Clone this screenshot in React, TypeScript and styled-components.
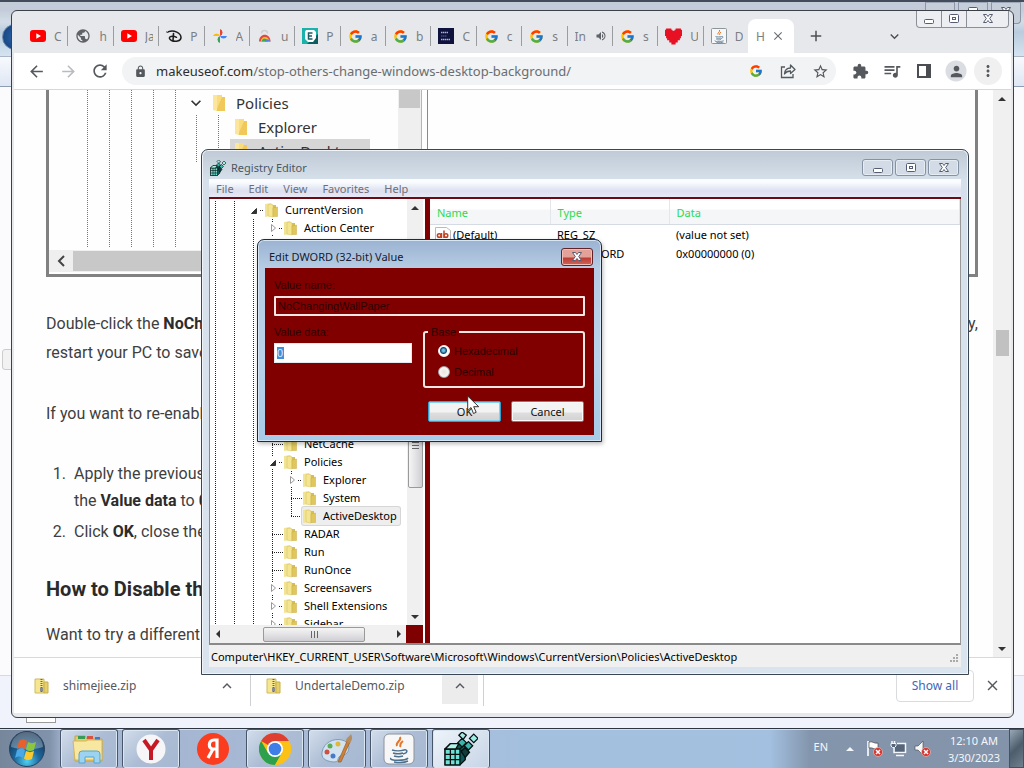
import React from "react";
import styled, { createGlobalStyle, css } from "styled-components";
import {
  MdArrowBack, MdArrowForward, MdRefresh, MdLock, MdStarBorder, MdExtension, MdQueueMusic,
  MdPerson, MdMoreVert, MdClose, MdAdd, MdKeyboardArrowDown, MdKeyboardArrowUp, MdPublic, MdVolumeUp,
} from "react-icons/md";
import { FcGoogle } from "react-icons/fc";

const Global = createGlobalStyle`
  * { box-sizing: border-box; }
  body { margin: 0; font-family: "Noto Sans", "Open Sans", sans-serif; font-size: 11px; color: #111; overflow: hidden; }
  button, input { font: inherit; color: inherit; margin: 0; padding: 0; }
  button { border: 0; background: none; display: flex; align-items: center; justify-content: center; }
  svg { display: block; flex: none; }
`;

const Screen = styled.div`
  display: flex; flex-direction: column; height: 100vh; overflow: hidden;
`;
const Desktop = styled.main`
  position: relative; flex: 1; min-height: 0; overflow: hidden; background: #f0f3fb;
`;

/* ---------- window at the back ---------- */
const BackWindow = styled.div`
  height: 100%; display: flex; flex-direction: column; border-top: 2px solid #434c5b;
`;
const BackTop = styled.div`
  height: 55px; display: flex; justify-content: space-between;
  background: linear-gradient(#c3ccd8 0 8px, #d3dde8 20px, #b9cbdd 30px, #d6e4f1);
  border-bottom: 1px solid #aab6c6;
`;
const BackOrb = styled.div`
  margin: 22px 0 0 2px; width: 26px; height: 26px; border-radius: 13px;
  background: radial-gradient(#2a63a8, #123d78); border: 1px solid #6b86a8;
`;
const BackControls = styled.div`
  display: flex; gap: 3px; padding-right: 3px;
`;
const BackControl = styled.div`
  width: 30px; height: 22px; border: 1px solid #8b96a6; border-top-color: #9da8b8; border-radius: 0 0 4px 4px;
  background: #c5ced9; display: flex; justify-content: center; padding-top: 3px;
`;
const BackBar = styled.div`
  height: 30px; background: linear-gradient(#f7f9fd, #dfe7f4); border-bottom: 1px solid #8f9db3;
`;
const BackPage = styled.div`
  flex: 1; background: #fbfbfd; display: flex; align-items: center; padding-left: 2px;
`;
const BackStub = styled.div`
  width: 20px; height: 21px; border: 1px solid #ccc; border-radius: 3px; background: #f2f2f2; margin-bottom: 43px;
`;
const BackFoot = styled.div`
  height: 53px; border-top: 1px solid #d5dae2; background: #f0f3fb; display: flex; align-items: flex-end; padding: 0 0 5px 26px;
`;
const BackTab = styled.div`
  width: 30px; height: 20px; border: 1px solid #9a9a9a; background: #fff;
`;

/* ---------- browser ---------- */
const Browser = styled.section`
  position: absolute; inset: 10px 10px 10px 11px; display: flex; flex-direction: column;
  border: 1px solid #3c4047; border-radius: 6px; background: #e7e8eb; padding: 0 2px 4px; overflow: hidden;
`;
const TabStrip = styled.nav`
  height: 42px; display: flex; align-items: flex-end; padding-left: 9px;
`;
const Tabs = styled.div`
  flex: 1; min-width: 0; height: 34px; display: flex; align-items: center;
`;
const Tab = styled.button`
  flex: 1; min-width: 0; height: 20px; justify-content: flex-start; gap: 8px; padding-left: 7px;
  border-right: 1px solid #9a9ca0; color: #5f6368; font-size: 12px; overflow: hidden;
  &:last-child { border-right: 0; }
`;
const TabLabel = styled.span<{ $lead?: boolean }>`
  width: ${(p) => (p.$lead ? 12 : 8)}px; overflow: hidden; white-space: nowrap; text-align: left;
  color: #7b7e83;
`;
const ActiveTab = styled.div`
  width: 46px; height: 34px; background: #fff; border-radius: 8px 8px 0 0; display: flex; align-items: center;
  gap: 3px; padding-left: 8px; color: #6b6e72; font-size: 12px;
`;
const StripEnd = styled.div`
  width: 217px; align-self: stretch; display: flex; align-items: flex-end; color: #4c4f54;
`;
const StripButton = styled.button<{ $after?: number }>`
  width: 28px; height: 34px; margin-left: ${(p) => p.$after || 0}px;
`;
const Controls = styled.div`
  align-self: flex-start; margin: 0 2px 0 auto; display: flex; height: 17px;
  border: 1px solid #8b8f98; border-top: 0; border-radius: 0 0 4px 4px; background: #eceef1;
`;
const Control = styled.button<{ $w: number }>`
  width: ${(p) => p.$w}px; & + & { border-left: 1px solid #8b8f98; }
`;
const Toolbar = styled.div`
  height: 37px; background: #fff; border-bottom: 1px solid #d6d7da; display: flex; align-items: center; gap: 4px;
  padding: 0 9px 0 8px; color: #55585d;
`;
const ToolButton = styled.button<{ $round?: string; $faint?: boolean }>`
  width: 28px; height: 28px; border-radius: 14px; background: ${(p) => p.$round || "none"};
  color: ${(p) => (p.$faint ? "#b9bbbe" : "inherit")};
`;
const Omnibox = styled.form`
  flex: 1; min-width: 0; height: 28px; margin: 0 6px 0 4px; border-radius: 14px; background: #f1f3f4; display: flex;
  align-items: center; gap: 9px; padding: 0 2px 0 12px;
`;
const Url = styled.a`
  flex: 1; min-width: 0; overflow: hidden; white-space: nowrap; font-size: 13px; line-height: 20px; color: #6a6d71;
  text-decoration: none; strong { font-weight: 400; color: #2b2d30; }
`;
const OmniActions = styled.div`
  display: flex; gap: 4px;
`;
const Viewport = styled.div`
  flex: 1; min-height: 0; display: flex; background: #fefefe;
`;
const Article = styled.article`
  flex: 1; min-width: 0; overflow: hidden; padding: 0 15px 0 32px; font-family: Roboto, sans-serif;
  font-size: 16px; line-height: 29px; color: #3f3f3f;
  b { color: #2c2c2c; font-weight: 700; }
`;
const PageScroll = styled.div`
  width: 18px; background: #f0f0f0; display: flex; flex-direction: column; align-items: center;
`;
const Arrow = styled.button<{ $end?: boolean }>`
  width: 15px; height: 17px; flex: none; color: #444; margin-top: ${(p) => (p.$end ? "auto" : 0)};
`;
const PageThumb = styled.div`
  width: 13px; height: 26px; margin-top: 223px; margin-bottom: auto; background: #c1c1c1;
`;
const Line = styled.p<{ $top?: number }>`
  margin: ${(p) => p.$top || 0}px 0 0; display: flex; justify-content: space-between; white-space: nowrap;
`;
const Steps = styled.ol`
  margin: 32px 0 0; padding-left: 24px; line-height: 27px; white-space: nowrap;
  li { padding-left: 4px; margin-bottom: 4px; }
`;
const Heading = styled.h2`
  margin: 29px 0 0; font-size: 20px; line-height: 30px; color: #2a2a2a; white-space: nowrap;
`;

/* ---------- figure in the article ---------- */
const Figure = styled.figure`
  margin: 0; height: 187px; border: solid #818181; border-width: 0 3px 3px; display: flex; overflow: hidden;
  font-family: "Noto Sans", "Open Sans", sans-serif; font-size: 15px; line-height: 24px; color: #333;
`;
const FigTree = styled.div`
  width: 379px; border-right: 1px solid #8a8a8a; padding-right: 6px; display: flex; flex-direction: column;
  background: linear-gradient(#b5b5b5, #b5b5b5) 372px 0 / 1px 100% no-repeat;
`;
const FigBody = styled.div`
  flex: 1; min-height: 0; display: flex;
`;
const FigRails = styled.div`
  display: flex; padding-left: 22px;
`;
const FigRail = styled.div`
  width: 22px; margin-bottom: 2px;
  background: repeating-linear-gradient(#777 0 1px, transparent 1px 2px) 16px 0 / 1px 100% no-repeat;
`;
const FigRows = styled.div`
  flex: 1; min-width: 0; padding: 1px 0 0 5px;
`;
const FigRow = styled.div<{ $picked?: boolean }>`
  height: 24px; display: flex; align-items: center; gap: 10px; width: fit-content; padding-right: 12px; white-space: nowrap;
  ${(p) => p.$picked && css`background: linear-gradient(#d6d6d6, #d6d6d6) 44px 0 / 100% 100% no-repeat;`}
`;
const FigLead = styled.span<{ $wide?: boolean }>`
  width: ${(p) => (p.$wide ? 38 : 16)}px; display: flex; height: 24px; align-items: center;
  background: ${(p) => (p.$wide
    ? "repeating-linear-gradient(#777 0 1px, transparent 1px 2px) 10px 0 / 1px 100% no-repeat, repeating-linear-gradient(#777 0 1px, transparent 1px 2px) 32px 0 / 1px 100% no-repeat"
    : "none")};
`;
const FigScroll = styled.div`
  width: 23px; background: #efefef; &::before { content: ""; display: block; margin-left: 1px; width: 21px; height: 18px; background: #c8c8c8; }
`;
const FigFoot = styled.div`
  height: 22px; margin-bottom: 2px; display: flex; align-items: center; background: #efefef; color: #444;
`;
const FigThumb = styled.div`
  flex: 1; height: 20px; background: #c8c8c8;
`;

/* ---------- download shelf ---------- */
const Shelf = styled.footer`
  height: 56px; background: #fff; border-top: 1px solid #d8d9db; display: flex; align-items: center; padding: 0 1px 0 5px;
`;
const Download = styled.div`
  width: 233px; height: 40px; border-right: 1px solid #cfd0d3; display: flex; align-items: center; gap: 13px;
  padding: 0 5px 0 15px; font-size: 12px; color: #55585d; &:first-child { width: 232px; }
  & > span { flex: 1; }
`;
const ShelfButton = styled.button<{ $hot?: boolean }>`
  width: 36px; height: 36px; background: ${(p) => (p.$hot ? "#ececec" : "none")}; color: #55585d;
`;
const ShowAll = styled.button`
  width: 78px; height: 32px; margin-left: auto; border: 1px solid #d9dbdf; border-radius: 4px; color: #4267b8; font-size: 12px;
`;

/* ---------- glass windows ---------- */
const Registry = styled.section`
  position: absolute; inset: 149px 55px 53px 201px; display: flex; flex-direction: column; padding: 0 7px 7px;
  border: 1px solid #3b4654; border-radius: 7px 7px 0 0;
  background: linear-gradient(#bfcad6, #d5e0ea 30px, #d9e4ee); box-shadow: inset 0 0 0 1px #eef4f9;
`;
const TitleBar = styled.header<{ $h: number; $pad?: number }>`
  height: ${(p) => p.$h}px; padding: ${(p) => p.$pad || 0}px 1px 0; display: flex; align-items: center; gap: 5px; color: #4e565f;
`;
const TitleText = styled.h1`
  flex: 1; margin: 0; font-size: 11px; font-weight: 400;
`;
const FrameButton = styled.button`
  width: 31px; height: 17px; border: 1px solid #8492a3; border-radius: 3px; background: #d3dce6; box-shadow: inset 0 0 0 1px #e5ecf3;
`;
const FrameButtons = styled.div`
  display: flex; gap: 2px; padding-right: 1px;
`;
const MenuBar = styled.nav`
  height: 20px; display: flex; align-items: center; gap: 15px; padding-left: 7px; color: #6c6e7b;
  background: linear-gradient(#fafcfe 0 3px, #eff3fa 6px, #dddff0 12px, #e8e8f5);
  border-bottom: 2px solid #6a0a14; flex: none;
  button { height: 17px; }
`;
const Panes = styled.div`
  flex: 1; min-height: 0; display: flex; background: #7f0000; border-bottom: 2px solid #8a8a8a; border-left: 1px solid #888; border-right: 1px solid #999;
`;
const TreePane = styled.div`
  width: 215px; display: flex; flex-direction: column; border-right: 2px solid #fff; background: #fff;
`;
const TreeBody = styled.div`
  flex: 1; min-height: 0; display: flex;
`;
const Rows = styled.div`
  flex: 1; min-width: 0; overflow: hidden; padding-top: 2px;
`;
const Row = styled.div<{ $h?: number }>`
  height: ${(p) => p.$h || 18}px; display: flex; white-space: nowrap; color: #000;
`;
const dots = "repeating-linear-gradient(#222 0 1px, transparent 1px 2px)";
const hdots = "repeating-linear-gradient(90deg, #222 0 1px, transparent 1px 2px)";
type Kind = "pipe" | "tee" | "elbow" | "exp" | "root" | "blank";
const Guide = styled.span<{ $kind: Kind }>`
  width: ${(p) => (p.$kind === "pipe" || p.$kind === "blank" ? 19 : 16)}px; flex: none; display: flex; align-items: center;
  ${(p) => p.$kind === "pipe" && css`background: ${dots} 5px 0 / 1px 100% no-repeat;`}
  ${(p) => p.$kind === "tee" && css`background: ${dots} 5px 0 / 1px 100% no-repeat, ${hdots} 5px 9px / 11px 1px no-repeat;`}
  ${(p) => p.$kind === "elbow" && css`background: ${dots} 5px 0 / 1px 10px no-repeat, ${hdots} 5px 9px / 11px 1px no-repeat;`}
  ${(p) => p.$kind === "exp" && css`background: ${dots} 5px 0 / 1px 3px no-repeat, ${dots} 5px 16px / 1px 2px no-repeat, ${hdots} 12px 9px / 4px 1px no-repeat;`}
  ${(p) => p.$kind === "root" && css`background: ${hdots} 12px 9px / 4px 1px no-repeat;`}
`;
const Node = styled.span<{ $picked?: boolean }>`
  display: flex; align-items: center; gap: 5px; padding-right: 3px; line-height: 16px; border-radius: 2px;
  ${(p) => p.$picked && css`background: #eee; box-shadow: 0 0 0 1px #d6d6d6;`}
`;
const VScroll = styled.div`
  width: 16px; background: #f0f0f0; display: flex; flex-direction: column; align-items: center;
`;
const VThumb = styled.div`
  width: 15px; height: 86px; margin-top: 186px; border: 1px solid #9a9a9a; border-radius: 2px; display: flex; align-items: center; justify-content: center;
  background: linear-gradient(90deg, #f5f5f5, #e3e3e6 50%, #cfcfd3);
`;
const HRow = styled.div`
  height: 18px; display: flex; background: #7f0000;
`;
const HScroll = styled.div`
  flex: 1; background: #f0f0f0; display: flex; align-items: center; justify-content: space-between;
`;
const HThumb = styled.div`
  width: 102px; height: 15px; margin-left: 12px; border: 1px solid #9a9a9a; border-radius: 2px; display: flex; align-items: center; justify-content: center;
  background: linear-gradient(#f5f5f5, #e3e3e6 50%, #cfcfd3);
`;
const Corner = styled.div`
  width: 17px;
`;
const ListPane = styled.div`
  flex: 1; min-width: 0; margin-left: 5px; background: #fff;
`;
const ValueTable = styled.table`
  width: 100%; border-collapse: collapse; table-layout: fixed; text-align: left; color: #000;
  th { height: 25px; padding: 3px 0 0 7px; font-weight: 400; color: #2fd94f; background: linear-gradient(#fff 0 10px, #f4f6f8 11px); border-bottom: 1px solid #d5dbe2; border-right: 1px solid #e3e6ea; }
  td { height: 19px; padding: 1px 0 0 7px; }
  td:first-child { padding-left: 5px; }
`;
const Col = styled.col<{ $w?: number }>`
  width: ${(p) => (p.$w ? `${p.$w}px` : "auto")};
`;
const ValueName = styled.span`
  display: flex; align-items: center; gap: 2px;
`;
const StatusBar = styled.footer`
  height: 22px; background: #f0f0f0; display: flex; align-items: center; justify-content: space-between; padding: 0 2px; color: #000; flex: none;
`;

/* ---------- value dialog ---------- */
const Dialog = styled.section`
  position: absolute; left: 257px; top: 239px; width: 345px; padding: 0 7px 6px;
  border: 1px solid #1d2b3a; border-radius: 7px 7px 0 0;
  background: linear-gradient(#9bb3d2, #b6cce4 28px, #b9d2ea 60%, #a6cbe8);
  box-shadow: inset 0 0 0 1px #d5e5f4, 1px 2px 4px #0004;
`;
const DialogTitle = styled(TitleText)`
  color: #14202e; padding: 0 0 0 3px;
`;
const RedClose = styled.button`
  width: 32px; height: 18px; border: 1px solid #5f2328; border-radius: 3px;
  background: linear-gradient(#e3a198 0 8px, #bd3c33 9px, #d0655c); box-shadow: inset 0 0 0 1px #f0bdb7;
`;
const Form = styled.form`
  background: #800000; color: #2c0000; padding: 9px 9px 13px; display: flex; flex-direction: column;
  font-family: "Liberation Sans", Arial, sans-serif;
`;
const Label = styled.label`
  line-height: 16px;
`;
const NameInput = styled.input`
  width: 100%; height: 20px; margin-top: 3px; border: 2px solid #f6e6e3; background: transparent; padding-left: 2px; border-radius: 1px;
`;
const Split = styled.div`
  display: flex; gap: 11px; margin-top: 8px;
`;
const DataField = styled.div`
  width: 138px; display: flex; flex-direction: column;
`;
const DataBox = styled.input`
  width: 138px; height: 20px; margin-top: 3px; border: 1px solid #e3e9ef; color: #d9ecff; padding: 0 2px; outline: 0;
  background: linear-gradient(#3f8fdc, #3f8fdc) 2px 3px / 7px 12px no-repeat #fff;
`;
const Base = styled.fieldset`
  flex: 1; min-width: 0; margin: 0; padding: 3px 13px 6px; border: 2px solid #f6e6e3; border-radius: 3px; display: flex; flex-direction: column; gap: 5px;
  legend { padding: 0 3px; margin-left: -10px; line-height: 16px; }
`;
const Option = styled.label`
  display: flex; align-items: center; gap: 4px; line-height: 16px;
`;
const Radio = styled.input`
  appearance: none; width: 12px; height: 12px; border-radius: 6px; border: 1px solid #a0a4a8;
  background: radial-gradient(circle at 50% 50%, #e9e6df, #fff);
  &:checked { background: radial-gradient(circle at 45% 45%, #6cc3ea 0 1px, #17476f 3px, #fff 4px); border-color: #f4f4f4; }
`;
const Actions = styled.div`
  display: flex; justify-content: flex-end; gap: 10px; margin: 13px 1px 0 0; font-family: "Noto Sans", sans-serif;
`;
const PushButton = styled.button<{ $main?: boolean }>`
  width: 73px; height: 21px; border-radius: 2px; color: #111; border: 1px solid ${(p) => (p.$main ? "#35a0d0" : "#8a7672")};
  background: linear-gradient(#f3f3f3 0 10px, #dedede 11px, #d2d2d2);
  box-shadow: inset 0 0 0 1px ${(p) => (p.$main ? "#7fd3f3" : "#fbfbfb")};
`;
const Pointer = styled.div`
  position: absolute; left: 467px; top: 395px; pointer-events: none;
`;

/* ---------- taskbar ---------- */
const Taskbar = styled.footer`
  height: 40px; display: flex; gap: 4px; border-top: 1px solid #2d3640; box-shadow: inset 0 1px 0 #d3dfee;
  background: linear-gradient(90deg, #76869b, #8193ab 50px, #a3b4d0 64px, #a9bbd8 400px, #a4c0df 520px, #a3c0e0 770px, #8395ac 810px, #8394aa);
`;
const Start = styled.button`
  width: 56px; padding-right: 2px;
`;
const Task = styled.button<{ $open?: boolean; $hot?: boolean }>`
  width: 58px; height: 39px; border-radius: 3px;
  ${(p) => p.$open && css`border: 1px solid #48566a; border-bottom: 0; box-shadow: inset 0 0 0 1px #dbe6f3; background: linear-gradient(135deg, #d3deec, #acbcd4 50%, #a6b8d2);`}
  ${(p) => p.$hot && css`background: linear-gradient(135deg, #eef4fa, #c6d4e6);`}
`;
const Tray = styled.div`
  margin-left: auto; display: flex; align-items: center; color: #f3f7fb;
`;
const TrayIcons = styled.div`
  display: flex; align-items: center; gap: 7px; margin: 0 12px 0 16px;
`;
const ShowHidden = styled.button`
  width: 12px; height: 16px; margin-right: 3px;
`;
const Lang = styled.span`
  padding-bottom: 4px;
`;
const Clock = styled.time`
  width: 62px; text-align: center; line-height: 17px; white-space: nowrap;
`;
const Peek = styled.button`
  width: 15px; height: 39px; margin-left: 4px; border: 1px solid #46535f; background: linear-gradient(135deg, #9aa8b6, #4e5d6b 50%, #71808f);
`;

/* ---------- drawings ---------- */
const YouTube = () => (
  <svg width="16" height="16" viewBox="0 0 16 16"><rect y="2" width="16" height="12" rx="3" fill="#f00" /><path d="M6.3 5.2v5.6L11 8z" fill="#fff" /></svg>
);
const Disney = () => (
  <svg width="16" height="16" viewBox="0 0 16 16" fill="none" stroke="#1c1c1c" strokeLinecap="round">
    <path d="M2.500 3.600C8 1.500 15 5 15 9.500c0 4-6 4.500-9.500 3C3 11.300 2.500 9 5 8.500c2-.4 4 0 5.500.8" strokeWidth="1.500" /><path d="M7.500 5.500L7 12.500" strokeWidth="1.600" /><path d="M.6 4l1.400.4" />
  </svg>
);
const Photos = () => (
  <svg width="16" height="16" viewBox="0 0 16 16"><path d="M8 8V1a3.700 3.700 0 0 1 0 7z" fill="#ea4335" /><path d="M8 8h7a3.700 3.700 0 0 1-7 0z" fill="#4285f4" /><path d="M8 8v7a3.700 3.700 0 0 1 0-7z" fill="#34a853" /><path d="M8 8H1a3.700 3.700 0 0 1 7 0z" fill="#fbbc04" /></svg>
);
const Rainbow = () => (
  <svg width="16" height="16" viewBox="0 0 16 16" fill="none"><path d="M4.500 5.500c0-4 6-4 6 0" stroke="#cfcfcf" strokeWidth="1.400" /><path d="M2 13.500C2 4.500 13.500 4.500 13.500 13.500z" fill="#e5483d" /><path d="M3.800 13.500c0-6 8-6 9 0z" fill="#fbc12c" /><path d="M4.800 13.500c0-4 5.200-4 6 0z" fill="#3fa757" /><path d="M8 13.500c0-3 5-3 5.500 0z" fill="#4a83e8" /></svg>
);
const EBadge = () => (
  <svg width="16" height="16" viewBox="0 0 16 16"><rect width="16" height="16" fill="#1ab3ac" /><path d="M16 6v10H5z" fill="#0e5c60" /><path d="M4 2h8l2 2v6l-3 4H6l-3-3V4z" fill="#fff" /><path d="M10.500 5h-4v6h4M6.500 8h3.500" fill="none" stroke="#1d5c60" strokeWidth="1.500" /></svg>
);
const Game = () => (
  <svg width="16" height="16" viewBox="0 0 16 16"><rect width="16" height="16" fill="#10123e" /><path d="M3 4.500h7M3 11.500h9" stroke="#aab0d8" strokeWidth="1.400" strokeDasharray="1.500 .5" /><path d="M3 8h6" stroke="#59609a" strokeWidth="1.200" strokeDasharray="1.500 .5" /></svg>
);
const Heart = () => (
  <svg width="17" height="18" viewBox="0 0 16 16" fill="#e81123"><path d="M1 1h5v1h1v1h2V2h1V1h5v1h1v6h-1v2h-1v2h-2v2h-2v2H6v-2H4v-2H2v-2H1V8H0V2h1z" /></svg>
);
const Java = ({ s = 16, boxed = false }) => (
  <svg width={s} height={s} viewBox="0 0 32 32" fill="none">
    <rect x="1" y="1" width="30" height="30" rx={boxed ? 5 : 2} fill="#f7f7f7" stroke="#8c949c" strokeWidth={boxed ? 1 : 2} />
    <path d="M17 4c2 4-5 5-3 9M20 8c-4 3-2 4-3 6" stroke="#e2762b" strokeWidth="2" />
    <path d="M9 17c3 1 9 1 12 0M10 20c3 1 7 1 10 0M11 23c3 1 6 1 9 0M21 17c4-1 4 3-1 4M8 25c-3 3 15 3 17 0M11 29c6 1 12 0 14-1" stroke="#4d708e" strokeWidth="1.500" />
  </svg>
);
const Share = () => (
  <svg width="16" height="16" viewBox="0 0 16 16" fill="none" stroke="#55585d" strokeWidth="1.300"><path d="M5 4H1.500v10.500H13V11" /><path d="M4.500 11c.3-4 2.500-6 6-6V2l4.500 4.500-4.500 4V8C8 8 6 8.800 4.500 11z" strokeLinejoin="round" /></svg>
);
const SidePanel = () => (
  <svg width="16" height="16" viewBox="0 0 16 16"><path d="M2 2h12v12H2z" fill="none" stroke="#4a4d52" strokeWidth="2" /><path d="M10 2h4v12h-4z" fill="#4a4d52" /></svg>
);
const Folder = () => (
  <svg width="16" height="16" viewBox="0 0 16 16"><path d="M1 2l6-1v13l-6 1z" fill="#f1e595" /><path d="M6 3h6v11H6z" fill="#d9bd55" /><path d="M4 2.500L8 2l1 1.500V15l-5-1z" fill="#f4e590" stroke="#d6bf60" strokeWidth=".5" /><path d="M9 6l4.500-1v9.500H9z" fill="#e0c75c" stroke="#c9ab46" strokeWidth=".5" /></svg>
);
const FlatFolder = () => (
  <svg width="14" height="18" viewBox="0 0 14 18"><path d="M1 1h9v15H1z" fill="#f9dc7c" /><path d="M10 3h3v14h-9z" fill="#f0c95a" /><path d="M1 1h4v16L1 16z" fill="#fbe69b" /></svg>
);
const Zip = () => (
  <svg width="16" height="16" viewBox="0 0 16 16"><path d="M1 1h9v14H1z" fill="#f5e68f" stroke="#d0bb5e" /><path d="M10 4h4v11h-4z" fill="#e6cf68" stroke="#c8af4a" /><path d="M7.500 1v14" stroke="#666" strokeWidth="2" strokeDasharray="1 1" /><path d="M6 10h3v3H6z" fill="#8b8b8b" /></svg>
);
const Triangle = ({ d }: { d: "up" | "down" | "left" | "right" }) => (
  <svg width="8" height="8" viewBox="0 0 8 8" fill="#333"><path d={{ up: "M0 6l4-4 4 4z", down: "M0 2l4 4 4-4z", left: "M6 0L2 4l4 4z", right: "M2 0l4 4-4 4z" }[d]} /></svg>
);
const ChevronLeft = () => (
  <svg width="24" height="20" viewBox="0 0 24 20" fill="none" stroke="#444" strokeWidth="2"><path d="M15 5l-5 5 5 5" /></svg>
);
const Expander = ({ open }: { open?: boolean }) => (
  <svg width="11" height="10" viewBox="0 0 11 10"><path d={open ? "M8.500 3.500v5h-5z" : "M4.500 1.500v7l4-3.500z"} fill={open ? "#333" : "#fff"} stroke={open ? "#333" : "#999"} /></svg>
);
const Grip = ({ v }: { v?: boolean }) => (
  <svg width="9" height="9" viewBox="0 0 9 9" stroke="#666"><path d={v ? "M1 1.500h7M1 4.500h7M1 7.500h7" : "M1.500 1v7M4.500 1v7M7.500 1v7"} /></svg>
);
const WinGlyph = ({ k }: { k: "min" | "max" | "close" }) => (
  <svg width="14" height="12" viewBox="0 0 14 12" fill="#fff" stroke="#555d72">
    {k === "min" && <rect x="2.500" y="6.500" width="9" height="4" rx="1" />}
    {k === "max" && <><rect x="2.500" y="1.500" width="9" height="8" rx="1" /><rect x="5.500" y="4.500" width="3" height="2" /></>}
    {k === "close" && <path d="M2.500 1.500h3L7 3.500l1.500-2h3L8.700 5.500l2.800 4h-3L7 7.500l-1.500 2h-3l2.800-4z" />}
  </svg>
);
const RegIcon = ({ s = 16 }) => (
  <svg width={s} height={s} viewBox="0 0 32 32" stroke="#06100f" strokeWidth="1.200">
    <path d="M1 16l5-5h14v15l-5 5H1z" fill="#0c5957" /><path d="M1 16h14v15H1z" fill="#6fe0d5" /><path d="M6 16v15M10.500 16v15M1 21h14M1 26h14M15 16l5-5" />
    <path d="M1 16l5-5h8l-3 5z" fill="#aef2ea" />
    <path d="M13 10l4-4 4 4-4 4zM19 13l4-4 4 4-4 4z" fill="#3cb5ad" /><path d="M14 3l3-3 4 3-3 4zM24 6l4-4 4 4-4 4z" fill="#9fede6" /><path d="M16 18l4-3 4 4-4 5z" fill="#113d3c" />
  </svg>
);
const StringIcon = () => (
  <svg width="16" height="15" viewBox="0 0 16 15"><path d="M.5.5h11l4 3v11H.5z" fill="#fff" stroke="#bbb" /><g fill="none" stroke="#c2401f" strokeWidth="1.500"><circle cx="4.200" cy="8.500" r="1.800" /><path d="M6.500 6v5M9 3.500V11" /><circle cx="11" cy="8.500" r="1.800" /></g></svg>
);
const Orb = () => (
  <svg width="38" height="38" viewBox="0 0 38 38">
    <defs><radialGradient id="orb" cx=".5" cy=".85" r=".8"><stop offset="0" stopColor="#4fd0f2" /><stop offset=".45" stopColor="#1e679c" /><stop offset="1" stopColor="#12304f" /></radialGradient></defs>
    <circle cx="19" cy="19" r="17.500" fill="url(#orb)" stroke="#29435e" /><path d="M3 17a16 15 0 0 1 32 0c-9 3-22 3-32 0z" fill="#fff" opacity=".3" />
    <path d="M11 11c3-2 5-2 8 0l-2 8c-3-2-5-2-8 0z" fill="#e8602c" /><path d="M20 12c3 1.500 5 1.500 8 0l-2 8c-3 1.500-5 1.500-8-.5z" fill="#8cc63f" />
    <path d="M9 20c3-2 5-2 8 0l-2 8c-3-2-5-2-8 0z" fill="#4aa8e8" /><path d="M18 21c3 1.500 5 1.500 8 0l-2 8c-3 1.500-5 1.500-8-.5z" fill="#fbc92f" />
  </svg>
);
const Explorer = () => (
  <svg width="34" height="34" viewBox="0 0 34 34"><path d="M3 4h10l2 3h15v22H3z" fill="#e6cb68" stroke="#c2a448" /><path d="M6 4h7v3H6z" fill="#3a9b56" /><path d="M15 4h6v3h-6z" fill="#d7523f" /><path d="M23 5h5v3h-5z" fill="#4379c9" /><path d="M1 9h13l2-1h14v20H3z" fill="#f8e7a0" stroke="#d2b65b" /><path d="M7 31V22q0-3 3-3h15q3 0 3 3v9h-6v-6h-9v6z" fill="#9bd3f1" stroke="#58a5d0" /></svg>
);
const YBrowser = () => (
  <svg width="30" height="30" viewBox="0 0 30 30"><circle cx="15" cy="15" r="14.500" fill="#f6f6f8" /><path d="M8 6l7 10 7-10M15 15v11" fill="none" stroke="#c51a26" strokeWidth="4" /></svg>
);
const Yandex = () => (
  <svg width="32" height="32" viewBox="0 0 32 32"><circle cx="16" cy="16" r="16" fill="#fb3c1e" /><path d="M20 25V7h-3c-6 0-6 9-1 9h4M16 16l-5 9" fill="none" stroke="#fff" strokeWidth="3.200" /></svg>
);
const Chrome = () => (
  <svg width="32" height="32" viewBox="0 0 32 32"><circle cx="16" cy="16" r="16" fill="#fbc116" /><path d="M16 16L2.140 8A16 16 0 0 1 29.860 8z" fill="#df3f31" /><path d="M2.140 8A16 16 0 0 0 16 32l6.930-12L9.070 20z" fill="#2da04e" /><path d="M29.860 8H16v8l6.930 4L16 32A16 16 0 0 0 29.860 8z" fill="#fbc116" /><circle cx="16" cy="16" r="8" fill="#fff" /><circle cx="16" cy="16" r="6.300" fill="#3f7ee8" /></svg>
);
const Paint = () => (
  <svg width="34" height="32" viewBox="0 0 34 32"><path d="M2 19C4 9 14 5 22 7c8 2 8 9 5 13-2 3-6 1-8 4s0 5-6 5C5 28 1 25 2 19z" fill="#d3e2ef" stroke="#7d9cba" /><circle cx="10" cy="13" r="2.500" fill="#5aae52" /><circle cx="18" cy="11" r="2.500" fill="#e0b93a" /><circle cx="7" cy="19" r="2.500" fill="#d14e43" /><circle cx="13" cy="23" r="2.500" fill="#4879c9" /><path d="M18 29L27 8l3 1-9 20z" fill="#cd8036" stroke="#8c5420" strokeWidth=".6" /><path d="M26 8c0-3 3-4 5-7 2 4 1 6-1 9z" fill="#b88d5d" /></svg>
);
const Badge = () => (<><circle cx="12" cy="12" r="4.500" fill="#d5332d" stroke="#f3c9c6" strokeWidth=".6" /><path d="M10 10l4 4m0-4l-4 4" stroke="#fff" strokeWidth="1.500" /></>);
const Flag = () => (<svg width="17" height="17" viewBox="0 0 17 17"><path d="M2 1v15" stroke="#fff" strokeWidth="1.600" /><path d="M3 2c4-1 5 2 9 1v6c-4 1-5-2-9-1z" fill="#fff" stroke="#333" strokeWidth=".6" /><Badge /></svg>);
const Net = () => (<svg width="17" height="17" viewBox="0 0 17 17" fill="none"><path d="M5 3h11v10.500H5z" fill="#56657a" /><path d="M7 3.500h8.500v9H4V8M6 15.500h8M2 1v2.500M4.500 1v2.500" stroke="#f3f6fa" strokeWidth="1.500" /><path d="M1 3.500h5V6L4.500 7.500h-2L1 6z" fill="#56657a" stroke="#f3f6fa" /></svg>);
const Mute = () => (<svg width="17" height="17" viewBox="0 0 17 17"><path d="M1 6h3l5-5v14l-5-5H1z" fill="#f4f6f8" stroke="#444" strokeWidth=".6" /><Badge /></svg>);

const G = () => <FcGoogle size={15} />;
const tabs: { icon?: React.ReactNode; label: string; sound?: boolean }[] = [
  { icon: <YouTube />, label: "C" }, { icon: <MdPublic size={16} />, label: "h" }, { icon: <YouTube />, label: "Ja" },
  { icon: <Disney />, label: "P" }, { icon: <Photos />, label: "A" }, { icon: <Rainbow />, label: "u" }, { icon: <EBadge />, label: "P" },
  { icon: <G />, label: "a" }, { icon: <G />, label: "b" }, { icon: <Game />, label: "C" }, { icon: <G />, label: "c" },
  { icon: <G />, label: "s" }, { label: "In", sound: true }, { icon: <G />, label: "s" }, { icon: <Heart />, label: "U" }, { icon: <Java />, label: "D" },
];

type Item = { name: string; guides: Kind[]; open?: boolean; picked?: boolean };
const three: Kind[] = ["pipe", "pipe", "pipe"];
const topRows: Item[] = [
  { name: "CurrentVersion", guides: ["pipe", "pipe", "root"], open: true },
  { name: "Action Center", guides: [...three, "exp"] },
];
const lowRows: Item[] = [
  { name: "NetCache", guides: [...three, "tee"] },
  { name: "Policies", guides: [...three, "exp"], open: true },
  { name: "Explorer", guides: [...three, "pipe", "exp"] },
  { name: "System", guides: [...three, "pipe", "tee"] },
  { name: "ActiveDesktop", guides: [...three, "pipe", "elbow"], picked: true },
  { name: "RADAR", guides: [...three, "tee"] },
  { name: "Run", guides: [...three, "tee"] },
  { name: "RunOnce", guides: [...three, "tee"] },
  { name: "Screensavers", guides: [...three, "exp"] },
  { name: "Shell Extensions", guides: [...three, "exp"] },
  { name: "Sidebar", guides: [...three, "exp"] },
];
const TreeRow = ({ item }: { item: Item }) => (
  <Row>
    {item.guides.map((g, i) => (
      <Guide key={i} $kind={g}>{(g === "exp" || g === "root") && <Expander open={item.open} />}</Guide>
    ))}
    <Node $picked={item.picked}><Folder />{item.name}</Node>
  </Row>
);

export default function App() {
  return (
    <Screen>
      <Global />
      <Desktop>
        <BackWindow>
          <BackTop>
            <BackOrb />
            <BackControls>
              <BackControl /><BackControl><WinGlyph k="max" /></BackControl><BackControl><WinGlyph k="close" /></BackControl>
            </BackControls>
          </BackTop>
          <BackBar />
          <BackPage><BackStub /></BackPage>
          <BackFoot><BackTab /></BackFoot>
        </BackWindow>

        <Browser>
          <TabStrip>
            <Tabs>
              {tabs.map((t, i) => (
                <Tab key={i}>
                  {t.icon}
                  <TabLabel $lead={t.sound}>{t.label}</TabLabel>
                  {t.sound && <MdVolumeUp size={12} />}
                </Tab>
              ))}
            </Tabs>
            <ActiveTab><TabLabel $lead>H</TabLabel><MdClose size={14} /></ActiveTab>
            <StripEnd>
              <StripButton $after={8} aria-label="New tab"><MdAdd size={18} /></StripButton>
              <StripButton $after={50} aria-label="Search tabs"><MdKeyboardArrowDown size={17} /></StripButton>
              <Controls>
                <Control $w={24} aria-label="Minimize"><WinGlyph k="min" /></Control>
                <Control $w={25} aria-label="Maximize"><WinGlyph k="max" /></Control>
                <Control $w={42} aria-label="Close"><WinGlyph k="close" /></Control>
              </Controls>
            </StripEnd>
          </TabStrip>
          <Toolbar>
            <ToolButton aria-label="Back"><MdArrowBack size={19} /></ToolButton>
            <ToolButton $faint aria-label="Forward"><MdArrowForward size={19} /></ToolButton>
            <ToolButton aria-label="Reload"><MdRefresh size={20} /></ToolButton>
            <Omnibox>
              <MdLock size={13} />
              <Url href="#"><strong>makeuseof.com</strong>/stop-others-change-windows-desktop-background/</Url>
              <OmniActions>
                <ToolButton type="button" aria-label="Search"><FcGoogle size={14} /></ToolButton>
                <ToolButton type="button" aria-label="Share"><Share /></ToolButton>
                <ToolButton type="button" aria-label="Bookmark"><MdStarBorder size={17} /></ToolButton>
              </OmniActions>
            </Omnibox>
            <ToolButton aria-label="Extensions"><MdExtension size={17} /></ToolButton>
            <ToolButton aria-label="Media"><MdQueueMusic size={20} /></ToolButton>
            <ToolButton aria-label="Side panel"><SidePanel /></ToolButton>
            <ToolButton aria-label="Profile" $round="radial-gradient(#dadde2 0 10px, transparent 11px)"><MdPerson size={17} /></ToolButton>
            <ToolButton aria-label="Menu" $round="#f0f0f1"><MdMoreVert size={18} /></ToolButton>
          </Toolbar>
          <Viewport>
            <Article>
              <Figure>
                <FigTree>
                  <FigBody>
                    <FigRails><FigRail /><FigRail /><FigRail /><FigRail /><FigRail /></FigRails>
                    <FigRows>
                      <FigRow><FigLead><MdKeyboardArrowDown size={20} /></FigLead><FlatFolder />Policies</FigRow>
                      <FigRow><FigLead $wide /><FlatFolder />Explorer</FigRow>
                      <FigRow $picked><FigLead $wide /><FlatFolder />ActiveDesktop</FigRow>
                    </FigRows>
                    <FigScroll />
                  </FigBody>
                  <FigFoot><ChevronLeft /><FigThumb /></FigFoot>
                </FigTree>
              </Figure>
              <Line $top={32}><span>Double-click the <b>NoChangingWallPaper</b></span><span>Finally,</span></Line>
              <Line>restart your PC to save</Line>
              <Line $top={32}>If you want to re-enable</Line>
              <Steps>
                <li>Apply the previous steps<br />the <b>Value data</b> to <b>0</b></li>
                <li>Click <b>OK</b>, close the</li>
              </Steps>
              <Heading>How to Disable the</Heading>
              <Line $top={16}>Want to try a different</Line>
              <Line>desktop wallpaper</Line>
            </Article>
            <PageScroll><Arrow aria-label="Scroll up"><Triangle d="up" /></Arrow><PageThumb /><Arrow aria-label="Scroll down"><Triangle d="down" /></Arrow></PageScroll>
          </Viewport>
          <Shelf>
            <Download><Zip /><span>shimejiee.zip</span><ShelfButton aria-label="Options"><MdKeyboardArrowUp size={18} /></ShelfButton></Download>
            <Download><Zip /><span>UndertaleDemo.zip</span><ShelfButton $hot aria-label="Options"><MdKeyboardArrowUp size={18} /></ShelfButton></Download>
            <ShowAll>Show all</ShowAll>
            <ShelfButton aria-label="Close"><MdClose size={17} /></ShelfButton>
          </Shelf>
        </Browser>

        <Registry>
          <TitleBar $h={29} $pad={6}>
            <RegIcon />
            <TitleText>Registry Editor</TitleText>
            <FrameButtons>
              <FrameButton aria-label="Minimize"><WinGlyph k="min" /></FrameButton>
              <FrameButton aria-label="Maximize"><WinGlyph k="max" /></FrameButton>
              <FrameButton aria-label="Close"><WinGlyph k="close" /></FrameButton>
            </FrameButtons>
          </TitleBar>
          <MenuBar>
            {["File", "Edit", "View", "Favorites", "Help"].map((m) => <button key={m}>{m}</button>)}
          </MenuBar>
          <Panes>
            <TreePane>
              <TreeBody>
                <Rows>
                  {topRows.map((r) => <TreeRow key={r.name} item={r} />)}
                  <Row $h={198}>{three.map((g, i) => <Guide key={i} $kind={g} />)}</Row>
                  {lowRows.map((r) => <TreeRow key={r.name} item={r} />)}
                </Rows>
                <VScroll><Arrow aria-label="Scroll up"><Triangle d="up" /></Arrow><VThumb><Grip v /></VThumb><Arrow $end aria-label="Scroll down"><Triangle d="down" /></Arrow></VScroll>
              </TreeBody>
              <HRow>
                <HScroll><Arrow aria-label="Scroll left"><Triangle d="left" /></Arrow><HThumb><Grip /></HThumb><Arrow aria-label="Scroll right"><Triangle d="right" /></Arrow></HScroll>
                <Corner />
              </HRow>
            </TreePane>
            <ListPane>
              <ValueTable>
                <colgroup><Col $w={120} /><Col $w={119} /><Col /></colgroup>
                <thead><tr><th>Name</th><th>Type</th><th>Data</th></tr></thead>
                <tbody>
                  <tr><td><ValueName><StringIcon />(Default)</ValueName></td><td>REG_SZ</td><td>(value not set)</td></tr>
                  <tr><td /><td>REG_DWORD</td><td>0x00000000 (0)</td></tr>
                </tbody>
              </ValueTable>
            </ListPane>
          </Panes>
          <StatusBar>
            <span>Computer\HKEY_CURRENT_USER\Software\Microsoft\Windows\CurrentVersion\Policies\ActiveDesktop</span>
            <svg width="9" height="16" viewBox="0 0 9 16" fill="#aaa"><path d="M6 6h2v2H6zM3 9h2v2H3zM6 9h2v2H6zM0 12h2v2H0zM3 12h2v2H3zM6 12h2v2H6z" /></svg>
          </StatusBar>
        </Registry>

        <Dialog role="dialog" aria-label="Edit DWORD (32-bit) Value">
          <TitleBar $h={28} $pad={5}>
            <DialogTitle>Edit DWORD (32-bit) Value</DialogTitle>
            <RedClose aria-label="Close"><WinGlyph k="close" /></RedClose>
          </TitleBar>
          <Form onSubmit={(e) => e.preventDefault()}>
            <Label htmlFor="vname">Value name:</Label>
            <NameInput id="vname" readOnly value="NoChangingWallPaper" />
            <Split>
              <DataField>
                <Label htmlFor="vdata">Value data:</Label>
                <DataBox id="vdata" defaultValue="0" />
              </DataField>
              <Base>
                <legend>Base</legend>
                <Option><Radio type="radio" name="base" defaultChecked />Hexadecimal</Option>
                <Option><Radio type="radio" name="base" />Decimal</Option>
              </Base>
            </Split>
            <Actions>
              <PushButton $main type="submit">OK</PushButton>
              <PushButton type="button">Cancel</PushButton>
            </Actions>
          </Form>
        </Dialog>
        <Pointer><svg width="13" height="20" viewBox="0 0 13 20"><path d="M.7 1v14.500L4 12.500l2.500 6 2.700-1.200-2.500-5.600h5z" fill="#fff" stroke="#222" strokeWidth=".9" /></svg></Pointer>
      </Desktop>

      <Taskbar>
        <Start aria-label="Start"><Orb /></Start>
        <Task $open aria-label="Explorer"><Explorer /></Task>
        <Task $open aria-label="Yandex Browser"><YBrowser /></Task>
        <Task aria-label="Yandex"><Yandex /></Task>
        <Task $open aria-label="Chrome"><Chrome /></Task>
        <Task $open aria-label="Paint"><Paint /></Task>
        <Task $open aria-label="Java"><Java s={32} boxed /></Task>
        <Task $open $hot aria-label="Registry Editor"><RegIcon s={34} /></Task>
        <Tray>
          <Lang>EN</Lang>
          <TrayIcons>
            <ShowHidden aria-label="Show hidden icons"><svg width="8" height="8" viewBox="0 0 8 8" fill="#f3f7fb"><path d="M0 6l4-4 4 4z" /></svg></ShowHidden>
            <Flag /><Net /><Mute />
          </TrayIcons>
          <Clock>12:10 AM<br />3/30/2023</Clock>
          <Peek aria-label="Show desktop" />
        </Tray>
      </Taskbar>
    </Screen>
  );
}
